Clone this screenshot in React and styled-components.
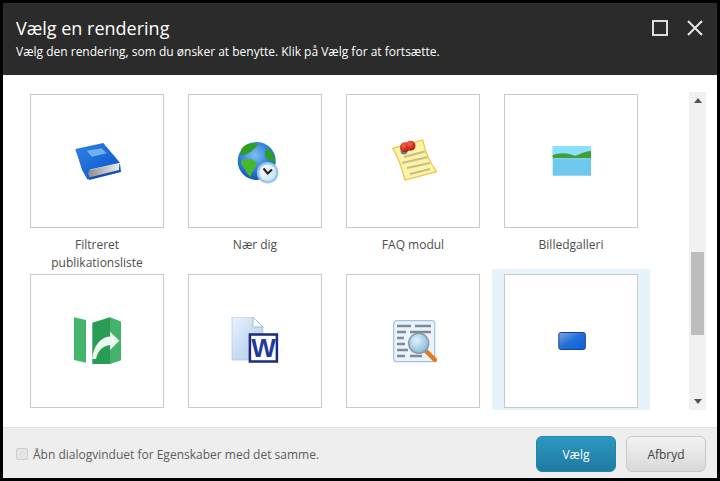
import React from 'react';
import styled, { createGlobalStyle } from 'styled-components';

const GlobalStyle = createGlobalStyle`
  html, body {
    margin: 0;
    padding: 0;
    background: #000;
  }
  body {
    font-family: "Open Sans", "Noto Sans", sans-serif;
  }
`;

const Dialog = styled.div`
  margin: 3px;
  width: 714px;
  height: 475px;
  display: flex;
  flex-direction: column;
  background: #fff;
`;

const Header = styled.header`
  height: 72px;
  flex: none;
  box-sizing: border-box;
  padding: 11px 14px 0 13px;
  display: flex;
  justify-content: space-between;
  background: #2b2b2b;
  color: #fff;
`;

const Title = styled.h1`
  margin: 0;
  font-size: 18px;
  font-weight: 400;
  line-height: 29px;
`;

const Subtitle = styled.p`
  margin: 0;
  font-size: 12px;
  line-height: 18px;
`;

const WindowButtons = styled.div`
  display: flex;
  gap: 19px;
  padding-top: 6px;
  align-items: flex-start;
`;

const Body = styled.main`
  flex: 1;
  min-height: 0;
  display: flex;
  justify-content: space-between;
  padding: 14px 11px 17px 15px;
  overflow: hidden;
`;

const Grid = styled.div`
  display: grid;
  grid-template-columns: repeat(4, 158px);
  grid-auto-rows: 180px;
  align-content: start;
`;

const Item = styled.div`
  box-sizing: border-box;
  padding: 5px 12px 2px;
  height: ${(p) => (p.$selected ? '141px' : '180px')};
  background: ${(p) => (p.$selected ? '#e6f3fb' : 'transparent')};
`;

const Tile = styled.div`
  box-sizing: border-box;
  width: 134px;
  height: 134px;
  border: 1px solid #c9c9c9;
  background: #fff;
  display: flex;
  align-items: center;
  justify-content: center;
`;

const Label = styled.div`
  margin-top: 8px;
  font-size: 12px;
  line-height: 18px;
  color: #4d4d4d;
  text-align: center;
`;

const Track = styled.div`
  width: 17px;
  margin-top: 3px;
  height: 318px;
  background: #f1f1f1;
  display: flex;
  flex-direction: column;
  align-items: center;
`;

const ArrowBox = styled.div`
  height: 17px;
  flex: none;
  display: flex;
  align-items: center;
  justify-content: center;
`;

const ThumbLane = styled.div`
  flex: 1;
  width: 13px;
  padding-top: 143px;
  box-sizing: border-box;
`;

const Thumb = styled.div`
  height: 83px;
  background: #bdbdbd;
`;

const Footer = styled.footer`
  height: 51px;
  flex: none;
  box-sizing: border-box;
  border-top: 1px solid #e2e2e2;
  background: #eee;
  padding: 8px 11px 6px 13px;
  display: flex;
  align-items: center;
  justify-content: space-between;
`;

const CheckLabel = styled.label`
  display: flex;
  align-items: center;
  gap: 5px;
  font-size: 12px;
  color: #5c5c5c;
`;

const CheckBox = styled.span`
  box-sizing: border-box;
  width: 12px;
  height: 12px;
  border: 1px solid #cfcfcf;
  border-radius: 2px;
  background: #e4e4e4;
`;

const Actions = styled.div`
  display: flex;
  gap: 10px;
`;

const Button = styled.button`
  box-sizing: border-box;
  width: 80px;
  height: 36px;
  border-radius: 6px;
  font-family: inherit;
  font-size: 12px;
  padding: 0;
  border: 1px solid ${(p) => (p.$primary ? '#2385ad' : '#c9c9c9')};
  color: ${(p) => (p.$primary ? '#fff' : '#3f3f3f')};
  background: ${(p) =>
    p.$primary
      ? 'linear-gradient(#2c98c2, #1f7aa0)'
      : 'linear-gradient(#f2f2f2, #d9d9d9)'};
`;

const BookIcon = () => (
  <svg width="48" height="48" viewBox="0 0 48 48">
    <defs>
      <linearGradient id="bookCover" x1="0" y1="0" x2="1" y2="1">
        <stop offset="0" stopColor="#2f84ea" />
        <stop offset="1" stopColor="#0a50c4" />
      </linearGradient>
      <linearGradient id="bookPages" x1="0" y1="0" x2="1" y2="0">
        <stop offset="0" stopColor="#8a8a8a" />
        <stop offset="1" stopColor="#ececec" />
      </linearGradient>
    </defs>
    <path d="M2 12 L13 36 L16 43 L48 35 L47 27 L16 34 Z" fill="#0d4fb5" />
    <path d="M14 33.500 L46.500 26 L46 33 L16 40.500 Z" fill="url(#bookPages)" />
    <path d="M2.500 12 L30.300 6 L47 25.700 L17 32.500 L15 36.500 L17 41.500 L14.500 42.500 L9 33 Z" fill="url(#bookCover)" />
    <path d="M13.700 13.700 L28.700 11.300 L33.700 16.300 L18.700 19.700 Z" fill="#6fb0ee" />
  </svg>
);

const GlobeIcon = () => (
  <svg width="48" height="48" viewBox="0 0 48 48">
    <defs>
      <radialGradient id="globeSea" cx="0.45" cy="0.35" r="0.7">
        <stop offset="0" stopColor="#7dc0f7" />
        <stop offset="0.6" stopColor="#2a78d8" />
        <stop offset="1" stopColor="#0f4aa8" />
      </radialGradient>
      <linearGradient id="clockFace" x1="0" y1="0" x2="1" y2="1">
        <stop offset="0" stopColor="#ffffff" />
        <stop offset="1" stopColor="#c3e0f5" />
      </linearGradient>
    </defs>
    <circle cx="25.700" cy="24" r="19" fill="url(#globeSea)" />
    <path d="M12 10 C16 6 23 5 27 7 C26 11 21 12 20 15 C16 16 15 19 10 18 C9 16 10 12 12 10 Z" fill="#2f9f24" />
    <path d="M11 23 C16 21 24 22 26 26 C25 32 21 33 20 40 C16 38 15 33 12 30 C10 28 9 25 11 23 Z" fill="#45b82d" />
    <path d="M36 11 C40 13 44 19 44 25 C41 26 38 22 35 21 C33 18 34 13 36 11 Z" fill="#2f9f24" />
    <circle cx="36.700" cy="35.700" r="10.800" fill="#9cc8e8" />
    <circle cx="36.700" cy="35.700" r="8.300" fill="url(#clockFace)" />
    <path d="M32.500 31.500 L36.700 36.500 L41 32.500" fill="none" stroke="#222" strokeWidth="2" />
  </svg>
);

const NoteIcon = () => (
  <svg width="48" height="48" viewBox="0 0 48 48">
    <defs>
      <radialGradient id="pinBall" cx="0.4" cy="0.3" r="0.7">
        <stop offset="0" stopColor="#f26a4a" />
        <stop offset="1" stopColor="#b81208" />
      </radialGradient>
    </defs>
    <path d="M3.700 11.300 L33.700 3 C36 14 41 26 47.700 34.700 L16 43 C13 31 9 20 3.700 11.300 Z" fill="#fbf3a8" stroke="#eec23e" strokeWidth="1.200" />
    <path d="M15 20 L36 14.500" stroke="#c9bd87" strokeWidth="2.200" />
    <path d="M13 26 L39 20" stroke="#c9bd87" strokeWidth="2.200" />
    <path d="M18 31 L41 26" stroke="#c9bd87" strokeWidth="2.200" />
    <path d="M21 37 L41 32" stroke="#c9bd87" strokeWidth="2.200" />
    <circle cx="15" cy="14" r="3.500" fill="#5f7f9c" />
    <circle cx="16" cy="10.300" r="5" fill="url(#pinBall)" />
    <circle cx="21.500" cy="8.700" r="5" fill="url(#pinBall)" />
  </svg>
);

const PictureIcon = () => (
  <svg width="48" height="48" viewBox="0 0 48 48">
    <rect x="5.700" y="9" width="38.300" height="29.700" fill="#6ec7ec" />
    <rect x="5.700" y="9" width="38.300" height="10" fill="#8de0fb" />
    <path d="M5.700 18 C12 16 20 15 28 19 C33 17 39 14 44 14 L44 22 L34 21.500 C25 22 14 21 5.700 21 Z" fill="#3f9f38" />
    <rect x="5.700" y="21" width="38.300" height="1.500" fill="#7fd0ef" />
  </svg>
);

const MapIcon = () => (
  <svg width="48" height="48" viewBox="0 0 48 48">
    <path d="M1 0.300 L13 3 L13 45.700 L1 43 Z" fill="#45b56e" />
    <path d="M19.300 5.700 L37 0.300 L37 47 L19.300 47 Z" fill="#2a9d54" />
    <path d="M37 0.300 L48.700 4.700 L48.700 43 L37 47 Z" fill="#43b26b" />
    <path d="M19.300 42 C20 30 27 20 37 19.500 L37 14.700 L46.300 23.700 L37 33 L37 28 C30 29 25 33 23 42 Z" fill="#eef8f1" />
  </svg>
);

const WordIcon = () => (
  <svg width="48" height="48" viewBox="0 0 48 48">
    <defs>
      <linearGradient id="wordPage" x1="0" y1="0" x2="1" y2="1">
        <stop offset="0" stopColor="#eaf3fd" />
        <stop offset="1" stopColor="#a9c6ea" />
      </linearGradient>
    </defs>
    <path d="M1 0 L22 0 L32 10 L32 43 L1 43 Z" fill="url(#wordPage)" stroke="#b9c9dd" strokeWidth="0.800" />
    <path d="M22 0 L22 10 L32 10 Z" fill="#f6f9fd" stroke="#9fb3cc" strokeWidth="0.800" />
    <rect x="18.900" y="17.500" width="27" height="27" fill="#fff" stroke="#1c2a7a" strokeWidth="2.500" />
    <text x="32.400" y="40" textAnchor="middle" fontFamily="Liberation Sans, sans-serif" fontWeight="700" fontSize="26" fill="#1f3a9e">W</text>
  </svg>
);

const SearchDocIcon = () => (
  <svg width="48" height="48" viewBox="0 0 48 48">
    <defs>
      <radialGradient id="lens" cx="0.4" cy="0.35" r="0.7">
        <stop offset="0" stopColor="#e3f2fb" />
        <stop offset="1" stopColor="#7db6da" />
      </radialGradient>
    </defs>
    <rect x="4.700" y="3.700" width="41" height="41" rx="3" fill="#eaf3fb" stroke="#9fc3e2" strokeWidth="1.200" />
    <path d="M8 9 L22 9 M26 9 L42 9 M8 15 L17 15 M21 15 L42 15 M8 21 L15 21 M8 27 L16 27 M8 33 L19 33 M8 39 L16 39 M21 39 L33 39" stroke="#7f8a94" strokeWidth="2.400" />
    <path d="M36.500 33.500 L46 43" stroke="#e8791c" strokeWidth="4.500" strokeLinecap="round" />
    <circle cx="29.700" cy="26.300" r="10" fill="url(#lens)" stroke="#8a9aa6" strokeWidth="1.500" />
  </svg>
);

const RectIcon = () => (
  <svg width="48" height="48" viewBox="0 0 48 48">
    <defs>
      <linearGradient id="rectFill" x1="0" y1="0" x2="1" y2="1">
        <stop offset="0" stopColor="#7fa8e0" />
        <stop offset="0.5" stopColor="#1f6fd6" />
        <stop offset="1" stopColor="#0a63d8" />
      </linearGradient>
    </defs>
    <rect x="11.800" y="15.500" width="26.500" height="17" rx="2" fill="url(#rectFill)" stroke="#1b3f9e" strokeWidth="1" />
  </svg>
);

const items = [
  { icon: <BookIcon />, label: <>Filtreret<br />publikationsliste</> },
  { icon: <GlobeIcon />, label: 'Nær dig' },
  { icon: <NoteIcon />, label: 'FAQ modul' },
  { icon: <PictureIcon />, label: 'Billedgalleri' },
  { icon: <MapIcon /> },
  { icon: <WordIcon /> },
  { icon: <SearchDocIcon /> },
  { icon: <RectIcon />, selected: true },
];

const App = () => (
  <>
    <GlobalStyle />
    <Dialog>
      <Header>
        <div>
          <Title>Vælg en rendering</Title>
          <Subtitle>Vælg den rendering, som du ønsker at benytte. Klik på Vælg for at fortsætte.</Subtitle>
        </div>
        <WindowButtons>
          <svg width="16" height="16" viewBox="0 0 16 16">
            <rect x="1" y="1" width="14" height="14" fill="none" stroke="#ddd" strokeWidth="2" />
          </svg>
          <svg width="16" height="16" viewBox="0 0 16 16">
            <path d="M1 1 L15 15 M15 1 L1 15" stroke="#e6e6e6" strokeWidth="2" />
          </svg>
        </WindowButtons>
      </Header>
      <Body>
        <Grid>
          {items.map((item, i) => (
            <Item key={i} $selected={item.selected}>
              <Tile>{item.icon}</Tile>
              {item.label && <Label>{item.label}</Label>}
            </Item>
          ))}
        </Grid>
        <Track>
          <ArrowBox>
            <svg width="8" height="5" viewBox="0 0 8 5"><path d="M0 5 L4 0 L8 5 Z" fill="#555" /></svg>
          </ArrowBox>
          <ThumbLane><Thumb /></ThumbLane>
          <ArrowBox>
            <svg width="8" height="5" viewBox="0 0 8 5"><path d="M0 0 L4 5 L8 0 Z" fill="#555" /></svg>
          </ArrowBox>
        </Track>
      </Body>
      <Footer>
        <CheckLabel>
          <CheckBox />
          Åbn dialogvinduet for Egenskaber med det samme.
        </CheckLabel>
        <Actions>
          <Button $primary>Vælg</Button>
          <Button>Afbryd</Button>
        </Actions>
      </Footer>
    </Dialog>
  </>
);

export default App;
